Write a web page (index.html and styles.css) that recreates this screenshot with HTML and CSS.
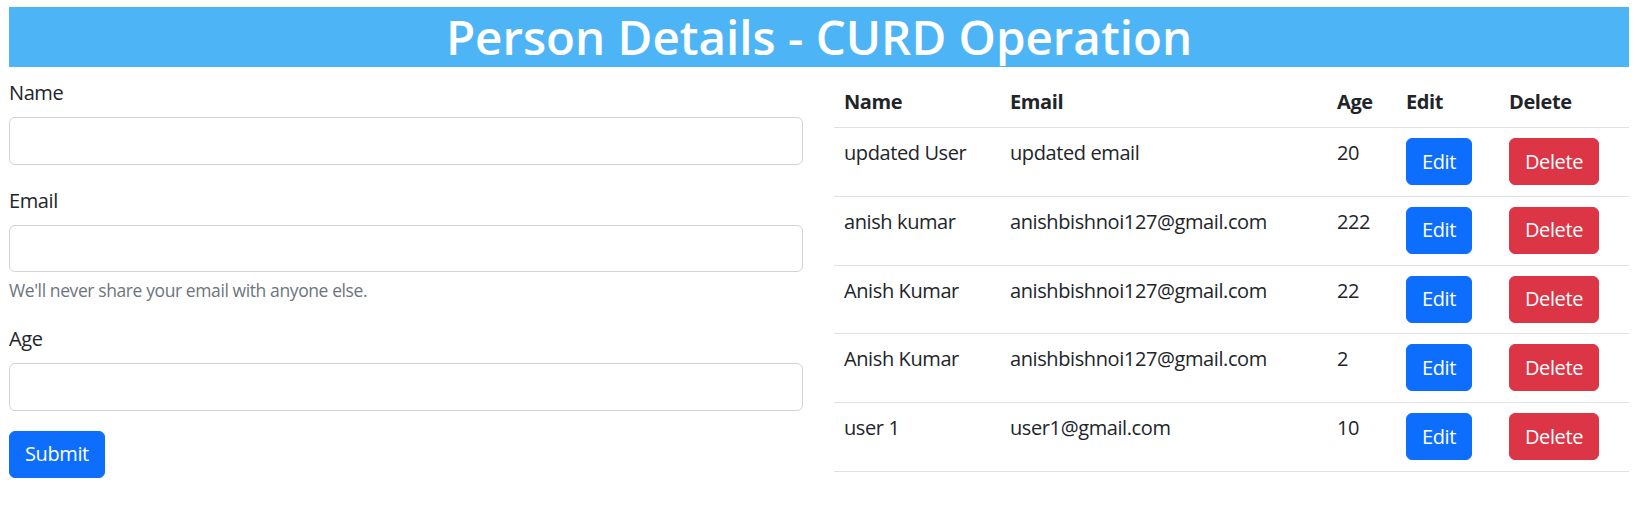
FILE: index.html
```html
<!DOCTYPE html>
<html lang="en">
<head>
<meta charset="utf-8">
<title>Person Details - CURD Operation</title>
<link rel="stylesheet" href="styles.css">
</head>
<body>
<div class="page">
  <h1 class="title">Person Details - CURD Operation</h1>
  <div class="main">
    <form class="person-form">
      <div class="field">
        <label class="label" for="name">Name</label>
        <input class="input" id="name" type="text">
      </div>
      <div class="field">
        <label class="label" for="email">Email</label>
        <input class="input" id="email" type="email">
        <div class="help">We'll never share your email with anyone else.</div>
      </div>
      <div class="field">
        <label class="label" for="age">Age</label>
        <input class="input" id="age" type="number">
      </div>
      <button type="button" class="btn btn-primary">Submit</button>
    </form>
    <table class="people">
      <colgroup>
        <col class="c-name"><col class="c-email"><col class="c-age"><col class="c-edit"><col class="c-del">
      </colgroup>
      <thead>
        <tr><th>Name</th><th>Email</th><th>Age</th><th>Edit</th><th>Delete</th></tr>
      </thead>
      <tbody>
        <tr><td>updated User</td><td>updated email</td><td>20</td><td><button class="btn btn-primary">Edit</button></td><td><button class="btn btn-danger">Delete</button></td></tr>
        <tr><td>anish kumar</td><td>anishbishnoi127@gmail.com</td><td>222</td><td><button class="btn btn-primary">Edit</button></td><td><button class="btn btn-danger">Delete</button></td></tr>
        <tr><td>Anish Kumar</td><td>anishbishnoi127@gmail.com</td><td>22</td><td><button class="btn btn-primary">Edit</button></td><td><button class="btn btn-danger">Delete</button></td></tr>
        <tr><td>Anish Kumar</td><td>anishbishnoi127@gmail.com</td><td>2</td><td><button class="btn btn-primary">Edit</button></td><td><button class="btn btn-danger">Delete</button></td></tr>
        <tr><td>user 1</td><td>user1@gmail.com</td><td>10</td><td><button class="btn btn-primary">Edit</button></td><td><button class="btn btn-danger">Delete</button></td></tr>
      </tbody>
    </table>
  </div>
</div>
</body>
</html>
```

FILE: styles.css
```css
* { box-sizing: border-box; }
body {
  margin: 0;
  font-family: "Open Sans", "Noto Sans", sans-serif;
  font-size: 20px;
  line-height: 30px;
  color: #212529;
  background: #fff;
}
.page {
  padding: 7px 6px 0 9px;
}
.title {
  margin: 0;
  background: #4db5f6;
  color: #fff;
  font-size: 47.5px;
  line-height: 60px;
  font-weight: 600;
  text-align: center;
}
.main {
  display: grid;
  grid-template-columns: 1fr 1fr;
  column-gap: 31px;
  margin-top: 10px;
  align-items: start;
}
.field {
  margin-bottom: 20px;
}
.label {
  display: block;
  margin-bottom: 10px;
  padding-top: 1px;
  line-height: 29px;
  letter-spacing: -0.4px;
}
.input {
  display: block;
  width: 100%;
  height: 47.5px;
  border: 1px solid #ced4da;
  border-radius: 6px;
  background: #fff;
  font: inherit;
  padding: 7.5px 15px;
}
.help {
  margin-top: 5px;
  font-size: 17.5px;
  line-height: 26.25px;
  color: #6c757d;
  letter-spacing: -0.4px;
}
.btn {
  display: inline-block;
  font-family: inherit;
  font-size: 20px;
  line-height: 30px;
  padding: 7.5px 15px;
  border-radius: 6px;
  color: #fff;
  cursor: pointer;
  letter-spacing: -0.4px;
}
.btn-primary {
  background: #0d6efd;
  border: 1px solid #0d6efd;
}
.btn-danger {
  background: #dc3545;
  border: 1px solid #dc3545;
}
.people {
  width: 100%;
  border-collapse: collapse;
  table-layout: fixed;
}
.c-name { width: 166px; }
.c-email { width: 327px; }
.c-age { width: 69px; }
.c-edit { width: 103px; }
.c-del { width: 130px; }
.people th,
.people td {
  padding: 10px;
  text-align: left;
  vertical-align: top;
  border-bottom: 1px solid #dee2e6;
  white-space: nowrap;
  letter-spacing: -0.4px;
}
.people td {
  padding-bottom: 10.8px;
}
.people th {
  font-weight: 700;
}
```
